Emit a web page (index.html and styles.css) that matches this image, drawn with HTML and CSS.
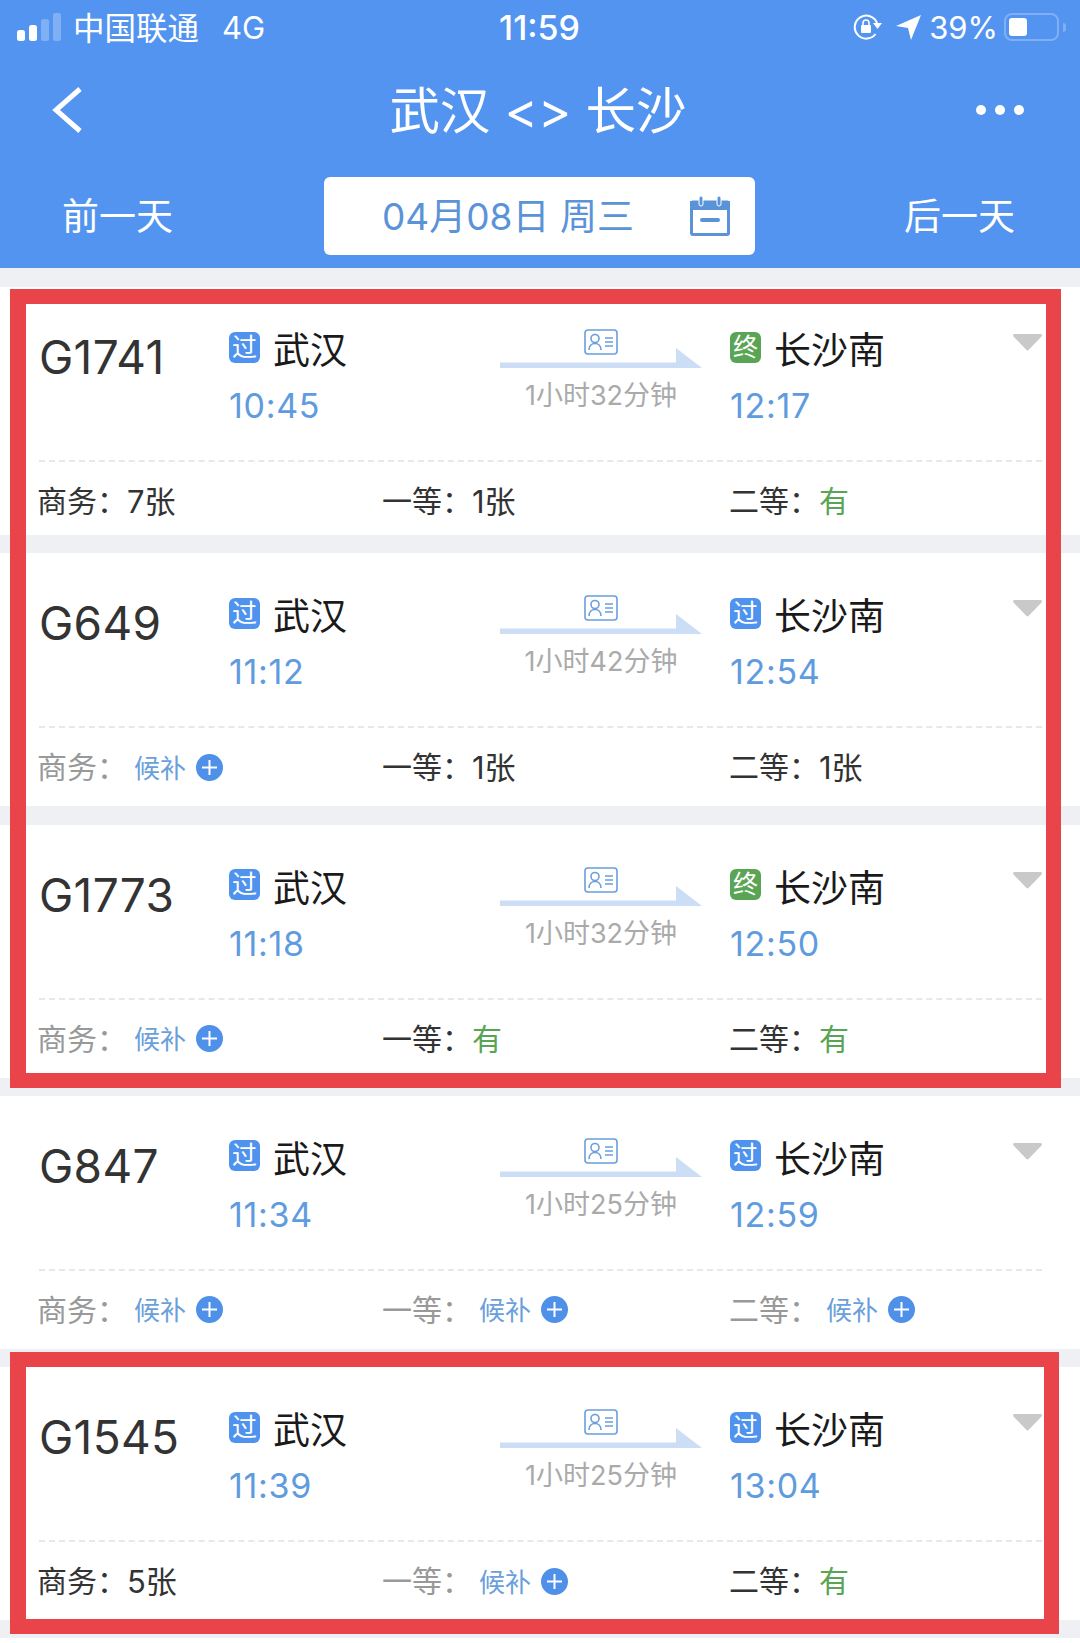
FILE: index.html
```html
<!DOCTYPE html>
<html lang="zh">

<head>
	<meta charset="utf-8">
	<title>武汉 &lt;&gt; 长沙</title>
	<link rel="stylesheet" href="styles.css">
</head>

<body>
	<svg class="defs" width="0" height="0">
		<symbol id="route" viewBox="0 0 202 39">
			<polygon points="0,33.5 176,33.5 176,19 202,39 0,39" fill="#cbdef6" />
			<rect x="85" y="1" width="32" height="24" rx="3" fill="none" stroke="#6a9fdc" stroke-width="1.6" />
			<circle cx="95" cy="9.5" r="4" fill="none" stroke="#6a9fdc" stroke-width="1.6" />
			<path d="M89 21c0-4 2.500-6.500 6-6.500s6 2.500 6 6.500M105 9h8M105 13h8M105 17h8" fill="none" stroke="#6a9fdc" stroke-width="1.6" />
		</symbol>
		<symbol id="plus" viewBox="0 0 27 27">
			<circle cx="13.500" cy="13.500" r="13.500" fill="#4f90e8" />
			<path d="M6 13.500h15M13.500 6v15" stroke="#fff" stroke-width="2" />
		</symbol>
		<symbol id="fold" viewBox="0 0 29 17">
			<path d="M2 0h25c2 0 2.500 1.500 1.500 2.500L15.500 16c-.6.600-1.400.600-2 0L.5 2.500C-.5 1.500 0 0 2 0z" fill="#c9c9c9" />
		</symbol>
	</svg>

	<div id="header">
		<div class="status_bar">
			<div class="status_left">
				<svg class="signal" width="45" height="28" viewBox="0 0 45 28">
					<rect x="0" y="17" width="8" height="11" rx="2.500" fill="#fff" />
					<rect x="12" y="12" width="8" height="16" rx="2.500" fill="#fff" />
					<rect x="24" y="6" width="8" height="22" rx="2.500" fill="#7fb0f4" />
					<rect x="36" y="0" width="8" height="28" rx="2.500" fill="#7fb0f4" />
				</svg>
				<span class="carrier">中国联通</span>
				<span class="network">4G</span>
			</div>
			<div class="status_time">11:59</div>
			<div class="status_right">
				<svg width="30" height="26" viewBox="0 0 30 26">
					<path d="M22.500 20a11.500 11.500 0 1 1 1.500-11" fill="none" stroke="#fff" stroke-width="2" />
					<polygon points="20,9 29,9 24.500,15" fill="#fff" />
					<rect x="8" y="11" width="10" height="8" rx="1" fill="#fff" />
					<path d="M10 11V9a3 3 0 0 1 6 0v2" fill="none" stroke="#fff" stroke-width="1.600" />
				</svg>
				<svg class="locate" width="25" height="25" viewBox="0 0 25 25">
					<polygon points="25,0 15,25 12,13 0,11" fill="#fff" />
				</svg>
				<span class="percent">39%</span>
				<div class="battery"><div class="battery_fill"></div></div>
				<div class="battery_cap"></div>
			</div>
		</div>

		<div class="nav_bar">
			<svg class="back" width="30" height="46" viewBox="0 0 30 46">
				<path d="M28 2L4 23l24 21" fill="none" stroke="#fff" stroke-width="5" />
			</svg>
			<div class="nav_title">武汉 &lt;&gt; 长沙</div>
			<div class="more"><i></i><i></i><i></i></div>
		</div>

		<div class="date_bar">
			<span class="day_link day_prev">前一天</span>
			<div class="date_box">
				<span>04月08日 周三</span>
				<svg width="40" height="40" viewBox="0 0 40 40">
					<rect x="1.500" y="6" width="37" height="32.500" rx="1.500" fill="none" stroke="#5b93d8" stroke-width="3" />
					<rect x="0" y="5" width="40" height="9" fill="#5b93d8" />
					<rect x="9" y="0" width="4" height="10" rx="2" fill="#5b93d8" stroke="#fff" />
					<rect x="27" y="0" width="4" height="10" rx="2" fill="#5b93d8" stroke="#fff" />
					<rect x="10" y="22" width="20" height="4" rx="2" fill="#5b93d8" />
				</svg>
			</div>
			<span class="day_link day_next">后一天</span>
		</div>
	</div>

	<div id="train_list">
		<div class="train_card first_card">
			<div class="train_top">
				<div class="train_no">G1741</div>
				<div class="station from_station">
					<div class="station_name"><span class="badge">过</span>武汉</div>
					<div class="station_time">10:45</div>
				</div>
				<div class="route">
					<svg width="202" height="39"><use href="#route" /></svg>
					<div class="duration">1小时32分钟</div>
				</div>
				<div class="station to_station">
					<div class="station_name"><span class="badge end_badge">终</span>长沙南</div>
					<div class="station_time">12:17</div>
				</div>
				<svg class="fold" width="29" height="17"><use href="#fold" /></svg>
			</div>
			<div class="seat_row">
				<div class="seat seat_first">商务：<span class="count">7张</span></div>
				<div class="seat seat_second">一等：<span class="count">1张</span></div>
				<div class="seat seat_third">二等：<span class="has">有</span></div>
			</div>
		</div>

		<div class="train_card">
			<div class="train_top">
				<div class="train_no">G649</div>
				<div class="station from_station">
					<div class="station_name"><span class="badge">过</span>武汉</div>
					<div class="station_time">11:12</div>
				</div>
				<div class="route">
					<svg width="202" height="39"><use href="#route" /></svg>
					<div class="duration">1小时42分钟</div>
				</div>
				<div class="station to_station">
					<div class="station_name"><span class="badge">过</span>长沙南</div>
					<div class="station_time">12:54</div>
				</div>
				<svg class="fold" width="29" height="17"><use href="#fold" /></svg>
			</div>
			<div class="seat_row">
				<div class="seat seat_first sold_out">商务：<span class="wait">候补</span><svg width="27" height="27"><use href="#plus" /></svg></div>
				<div class="seat seat_second">一等：<span class="count">1张</span></div>
				<div class="seat seat_third">二等：<span class="count">1张</span></div>
			</div>
		</div>

		<div class="train_card">
			<div class="train_top">
				<div class="train_no">G1773</div>
				<div class="station from_station">
					<div class="station_name"><span class="badge">过</span>武汉</div>
					<div class="station_time">11:18</div>
				</div>
				<div class="route">
					<svg width="202" height="39"><use href="#route" /></svg>
					<div class="duration">1小时32分钟</div>
				</div>
				<div class="station to_station">
					<div class="station_name"><span class="badge end_badge">终</span>长沙南</div>
					<div class="station_time">12:50</div>
				</div>
				<svg class="fold" width="29" height="17"><use href="#fold" /></svg>
			</div>
			<div class="seat_row">
				<div class="seat seat_first sold_out">商务：<span class="wait">候补</span><svg width="27" height="27"><use href="#plus" /></svg></div>
				<div class="seat seat_second">一等：<span class="has">有</span></div>
				<div class="seat seat_third">二等：<span class="has">有</span></div>
			</div>
		</div>

		<div class="train_card">
			<div class="train_top">
				<div class="train_no">G847</div>
				<div class="station from_station">
					<div class="station_name"><span class="badge">过</span>武汉</div>
					<div class="station_time">11:34</div>
				</div>
				<div class="route">
					<svg width="202" height="39"><use href="#route" /></svg>
					<div class="duration">1小时25分钟</div>
				</div>
				<div class="station to_station">
					<div class="station_name"><span class="badge">过</span>长沙南</div>
					<div class="station_time">12:59</div>
				</div>
				<svg class="fold" width="29" height="17"><use href="#fold" /></svg>
			</div>
			<div class="seat_row">
				<div class="seat seat_first sold_out">商务：<span class="wait">候补</span><svg width="27" height="27"><use href="#plus" /></svg></div>
				<div class="seat seat_second sold_out">一等：<span class="wait">候补</span><svg width="27" height="27"><use href="#plus" /></svg></div>
				<div class="seat seat_third sold_out">二等：<span class="wait">候补</span><svg width="27" height="27"><use href="#plus" /></svg></div>
			</div>
		</div>

		<div class="train_card">
			<div class="train_top">
				<div class="train_no">G1545</div>
				<div class="station from_station">
					<div class="station_name"><span class="badge">过</span>武汉</div>
					<div class="station_time">11:39</div>
				</div>
				<div class="route">
					<svg width="202" height="39"><use href="#route" /></svg>
					<div class="duration">1小时25分钟</div>
				</div>
				<div class="station to_station">
					<div class="station_name"><span class="badge">过</span>长沙南</div>
					<div class="station_time">13:04</div>
				</div>
				<svg class="fold" width="29" height="17"><use href="#fold" /></svg>
			</div>
			<div class="seat_row">
				<div class="seat seat_first">商务：<span class="count">5张</span></div>
				<div class="seat seat_second sold_out">一等：<span class="wait">候补</span><svg width="27" height="27"><use href="#plus" /></svg></div>
				<div class="seat seat_third">二等：<span class="has">有</span></div>
			</div>
		</div>

		<div class="train_card last_card"></div>
	</div>

	<div class="mark mark_top"></div>
	<div class="mark mark_bottom"></div>
</body>
</html>
```

FILE: styles.css
```css
* {
	margin: 0;
	padding: 0;
	box-sizing: border-box;
	font-family: Inter, "Noto Sans CJK SC", sans-serif;
}

html, body {
	height: 1643px;
	overflow: hidden;
	background: #eff0f4;
}

.defs {
	position: absolute;
}

#header {
	height: 268px;
	background: #5294ef;
	color: #fff;
}

.status_bar {
	display: grid;
	grid-template-columns: 1fr auto 1fr;
	align-items: center;
	height: 54px;
	padding: 0 14px 0 17px;
	font-size: 31px;
}

.status_left, .status_right {
	display: flex;
	align-items: center;
}

.signal {
	margin-right: 11px;
}

.carrier {
	padding-bottom: 3px;
	font-size: 31.500px;
}

.network {
	margin-left: 23px;
}

.status_time {
	margin-left: -4px;
	font-size: 34px;
	font-weight: 500;
}

.status_right {
	justify-content: flex-end;
}

.locate {
	margin-left: 13px;
}

.percent {
	margin-left: 8px;
}

.battery {
	width: 55px;
	height: 28px;
	margin-left: 6px;
	padding: 3px;
	border: 2px solid #7fb0f4;
	border-radius: 8px;
}

.battery_fill {
	width: 18px;
	height: 100%;
	background: #fff;
	border-radius: 3px;
}

.battery_cap {
	width: 3px;
	height: 9px;
	margin-left: 4px;
	background: #7fb0f4;
	border-radius: 0 3px 3px 0;
}

.nav_bar {
	display: grid;
	grid-template-columns: 1fr auto 1fr;
	align-items: center;
	height: 108px;
	padding: 2px 56px 0 52px;
}

.back {
	margin-top: 2px;
}

.nav_title {
	margin-bottom: 5px;
	font-size: 50.500px;
}

.more {
	display: flex;
	justify-content: flex-end;
	gap: 9px;
	margin-top: 2px;
}

.more i {
	width: 10px;
	height: 10px;
	background: #fff;
	border-radius: 50%;
}

.date_bar {
	display: grid;
	grid-template-columns: 324px 431px 1fr;
	align-items: center;
	height: 78px;
	margin-top: 15px;
	font-size: 37px;
}

.day_link {
	padding-bottom: 4px;
}

.day_prev {
	padding-left: 62px;
}

.day_next {
	padding-right: 65px;
	text-align: right;
}

.date_box {
	display: flex;
	justify-content: space-between;
	align-items: center;
	height: 78px;
	padding: 0 25px 0 58px;
	background: #fff;
	border-radius: 6px;
	color: #5b93d8;
}

.date_box span {
	padding-bottom: 4px;
}

#train_list {
	display: flex;
	flex-direction: column;
	gap: 18.300px;
	padding-top: 19px;
}

.train_card {
	flex: none;
	height: 253px;
	background: #fff;
}

.first_card {
	height: 248px;
}

.last_card {
	height: 5px;
}

.train_top {
	display: flex;
	align-items: flex-start;
	height: 175px;
	margin: 0 38px 0 39px;
	padding-top: 44px;
	border-bottom: 2px dashed #e8e8e8;
}

.train_no {
	width: 190px;
	padding-top: 1px;
	font-size: 46px;
	line-height: 50px;
	letter-spacing: 0.300px;
	color: #333;
}

.station {
	flex: none;
}

.from_station {
	width: 271px;
}

.to_station {
	width: 283px;
}

.station_name {
	display: flex;
	align-items: center;
	height: 40px;
	font-size: 37px;
	line-height: 40px;
	color: #1a1a1a;
}

.badge {
	width: 31px;
	height: 31px;
	margin: 0 13px 8px 0;
	background: #4f93ee;
	border-radius: 6px;
	font-size: 25px;
	line-height: 30px;
	text-align: center;
	color: #fff;
}

.end_badge {
	background: #5aa455;
}

.station_time {
	margin-top: 15px;
	font-size: 34px;
	line-height: 40px;
	letter-spacing: 0.700px;
	color: #5f9bdf;
}

.route {
	flex: none;
	width: 202px;
	margin: -2px 28px 0 0;
	text-align: center;
}

.route svg {
	display: block;
}

.duration {
	margin-top: 13px;
	font-size: 27px;
	line-height: 30px;
	color: #aaa;
}

.fold {
	flex: none;
	margin-top: 3px;
}

.seat_row {
	display: flex;
	align-items: center;
	height: 78px;
	padding-bottom: 4px;
	font-size: 30px;
	color: #333;
}

.seat {
	display: flex;
	align-items: center;
}

.seat_first {
	width: 382px;
	padding-left: 37px;
}

.seat_second {
	width: 347px;
}

.seat svg {
	margin-top: 4px;
}

.sold_out {
	color: #999;
}

.wait {
	margin: 2px 10px 0 7px;
	font-size: 26px;
	color: #6a9fdc;
}

.count {
	font-size: 31px;
	color: #333;
}

.has {
	color: #5aa455;
}

.mark {
	position: absolute;
	left: 10px;
	border: 15px solid #e8444a;
	border-left-width: 16px;
}

.mark_top {
	top: 289px;
	width: 1051px;
	height: 799px;
}

.mark_bottom {
	top: 1352px;
	width: 1049px;
	height: 282px;
}
```
